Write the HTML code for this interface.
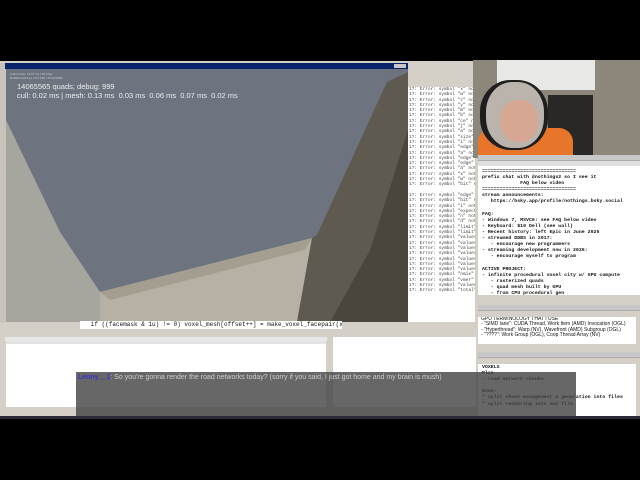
<!DOCTYPE html>
<html><head><style>
*{margin:0;padding:0;box-sizing:border-box}
body{width:640px;height:480px;background:#000;position:relative;overflow:hidden;font-family:"Liberation Sans",sans-serif}
.a{position:absolute}
.mono{font-family:"Liberation Mono",monospace}
.np{background:#fff;color:#111;font-size:4.9px;line-height:6.1px;white-space:pre;font-family:"Liberation Mono",monospace;font-weight:bold;overflow:hidden}
.tb{background:#c8c8c8;border-bottom:1px solid #aaa}
</style></head><body>
<div class="a" style="left:0;top:61px;width:640px;height:357px;background:#d4d0c8"></div>
<div class="a" style="left:0;top:63px;width:6px;height:260px;background:#c8c4bc"></div>
<div class="a" style="left:5px;top:63px;width:403px;height:6px;background:#0a246a"></div>
<div class="a" style="left:394px;top:64px;width:12px;height:4px;background:#c8c8c8"></div>
<svg class="a" style="left:6px;top:69px" width="402" height="253" viewBox="6 69 402 253">
<rect x="6" y="69" width="402" height="253" fill="#6d7480"/>
<polygon points="6,120 60,232 100,292 100,322 6,322" fill="#a6a59e"/>
<polygon points="100,292 312,238 340,238 330,322 100,322" fill="#b6b1a4"/>
<polygon points="100,292 312,238 305,250 110,300" fill="#a49e90"/>
<polygon points="387,82 408,72 408,322 297,322 312,238 317,235" fill="#6e6a5e"/>
<polygon points="387,82 408,72 408,130 370,250 330,322 297,322 312,238 317,235" fill="#5e5a50"/>
<polygon points="370,250 408,130 408,322 330,322" fill="#4a463e"/>
</svg>
<div class="a" style="left:10px;top:72px;font-size:3px;color:#ccc">Frame time: 13.67 ms | 60.0 fps<br>NVIDIA GeForce GTX 960 / PCIe/SSE2</div>
<div class="a" style="left:17px;top:82px;font-size:7.5px;line-height:9px;color:#eee">14065565 quads; debug: 999<br>cull: 0.02 ms | mesh: 0.13 ms &nbsp;0.03 ms &nbsp;0.06 ms &nbsp;0.07 ms &nbsp;0.02 ms</div>
<div class="a np" style="left:408px;top:63px;width:67px;height:10px;background:#d4d0c8"></div>
<div class="a np" style="left:408px;top:87px;width:67px;height:238px;font-weight:normal;font-size:4.5px;line-height:5.3px;color:#444;padding-left:1px">1?: Error: symbol "x" not
1?: Error: symbol "w" not
1?: Error: symbol "z" not
1?: Error: symbol "y" not
1?: Error: symbol "m" not
1?: Error: symbol "b" not
1?: Error: symbol "ce" not
1?: Error: symbol "j" not
1?: Error: symbol "a" not
1?: Error: symbol "size" n
1?: Error: symbol "i" not
1?: Error: symbol "edge" n
1?: Error: symbol "a" not
1?: Error: symbol "edge" n
1?: Error: symbol "edge" n
1?: Error: symbol "a" not
1?: Error: symbol "x" not
1?: Error: symbol "w" not
1?: Error: symbol "bit" not

1?: Error: symbol "edge" n
1?: Error: symbol "bit" not
1?: Error: symbol "i" not
1?: Error: symbol "expected
1?: Error: symbol "n" not
1?: Error: symbol "d" not
1?: Error: symbol "limit" n
1?: Error: symbol "limit" n
1?: Error: symbol "values"
1?: Error: symbol "values"
1?: Error: symbol "values"
1?: Error: symbol "values"
1?: Error: symbol "values"
1?: Error: symbol "values"
1?: Error: symbol "values"
1?: Error: symbol "nmis" n
1?: Error: symbol "vmer" n
1?: Error: symbol "values"
1?: Error: symbol "total" n</div>
<div class="a" style="left:6px;top:322px;width:470px;height:10px;background:#d4d0c8"></div>
<div class="a mono" style="left:80px;top:321px;width:262px;height:8px;background:#fff;font-size:6px;line-height:8px;white-space:pre;color:#111;overflow:hidden">   if ((facemask &amp; 1u) != 0) voxel_mesh[offset++] = make_voxel_facepair(x,y,z</div>
<div class="a" style="left:5px;top:337px;width:322px;height:4px;background:#e8e8e8"></div>
<div class="a" style="left:6px;top:341px;width:320px;height:66px;background:#fff;border-top:3px solid #e4e4e4"></div>
<div class="a" style="left:333px;top:337px;width:143px;height:70px;background:#fff"></div>
<!-- webcam -->
<div class="a" style="left:473px;top:60px;width:167px;height:98px;background:#8d877b"></div>
<div class="a" style="left:497px;top:60px;width:98px;height:30px;background:#e8e8e6"></div>
<div class="a" style="left:548px;top:95px;width:45px;height:63px;background:#2a2826"></div>
<div class="a" style="left:478px;top:128px;width:95px;height:30px;border-radius:14px 14px 0 0;background:#e8762a"></div>
<div class="a" style="left:480px;top:80px;width:68px;height:70px;border-radius:45%;background:#1e1e1e"></div>
<div class="a" style="left:486px;top:82px;width:58px;height:66px;border-radius:45%;background:#bab4ac"></div>
<div class="a" style="left:500px;top:100px;width:38px;height:42px;border-radius:45%;background:#d6a894"></div>
<!-- notepad 1 -->
<div class="a tb" style="left:478px;top:155px;width:162px;height:6px"></div>
<div class="a" style="left:478px;top:161px;width:162px;height:5px;background:#e0e0e0"></div>
<div class="a np" style="left:478px;top:166px;width:162px;height:129px;padding:3px 0 0 4px">================================
prefix chat with @nothings2 so I see it
             FAQ below video
================================
stream announcements:
   https://bsky.app/profile/nothings.bsky.social

FAQ:
- Windows 7, MSVC6: see FAQ below video
- Keyboard: $10 Dell (see wall)
- Recent history: left Epic in June 2025
- streamed DDBS in 2017:
   - encourage new programmers
- streaming development now in 2026:
   - encourage myself to program

ACTIVE PROJECT:
- infinite procedural voxel city w/ GPU compute
   - rasterized quads
   - quad mesh built by GPU
   - from CPU procedural gen</div>
<div class="a" style="left:478px;top:295px;width:162px;height:8px;background:#d4d0c8"></div>
<div class="a tb" style="left:478px;top:305px;width:162px;height:6px"></div>
<div class="a np" style="left:478px;top:317px;width:158px;height:27px;font-family:'Liberation Sans',sans-serif;font-weight:normal;font-size:5px;line-height:5.4px;padding-left:3px">GPU TERMINOLOGY THAT I USE
- "SIMD lane": CUDA Thread, Work Item (AMD) Invocation (OGL)
- "Hyperthread": Warp (NV), Wavefront (AMD) Subgroup (OGL)
- "????": Work Group (OGL), Coop Thread Array (NV)</div>
<div class="a tb" style="left:478px;top:352px;width:162px;height:6px"></div>
<div class="a np" style="left:478px;top:364px;width:158px;height:52px;padding:1px 0 0 4px">VOXELS
Plan
- road network chunks

Done:
* split chunk management &amp; generation into files
* split rendering into own file</div>
<div class="a" style="left:76px;top:372px;width:500px;height:44px;background:rgba(70,70,70,0.82)"></div>
<div class="a" style="left:78px;top:374px;font-size:7px;color:#ccc;white-space:nowrap"><b style="color:#3a34c8">Lenny__1</b>: So you're gonna render the road networks today? (sorry if you said, I just got home and my brain is mush)</div>
<div class="a" style="left:0;top:416px;width:640px;height:3px;background:#2a2a36"></div>
</body></html>
